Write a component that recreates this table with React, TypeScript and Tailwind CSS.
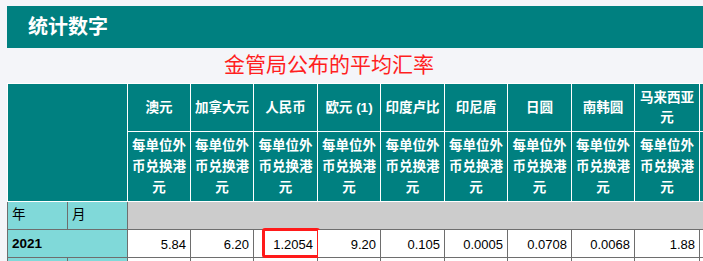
import React from 'react';

const font = { fontFamily: '"Liberation Sans", "Noto Sans CJK SC", sans-serif' };

const currencies = [
  { name: '澳元', w: 63, value: '5.84' },
  { name: '加拿大元', w: 63, value: '6.20' },
  { name: '人民币', w: 64, value: '1.2054', mark: true },
  { name: '欧元 (1)', w: 63, value: '9.20' },
  { name: '印度卢比', w: 64, value: '0.105' },
  { name: '印尼盾', w: 63, value: '0.0005' },
  { name: '日圆', w: 64, value: '0.0708' },
  { name: '南韩圆', w: 63, value: '0.0068' },
  { name: '马来西亚元', w: 65, value: '1.88' },
  { name: '', w: 64, value: '' },
];

export default function App() {
  return (
    <div className="w-[703px] h-[261px] overflow-hidden bg-[#f4f5f9] pt-[6px] pl-[7px]" style={font}>
      <div className="w-[760px] h-[42px] bg-[#008080] flex items-center pl-[21px]">
        <h1 className="text-white font-bold text-[20px] leading-none">统计数字</h1>
      </div>
      <div className="h-[35px] w-[644px] flex items-center justify-center pb-[2px]">
        <span className="text-[#ff1f1f] text-[21px] leading-none">金管局公布的平均汇率</span>
      </div>
      <table className="table-fixed border-collapse text-[13.5px]" style={{ width: 120 + currencies.reduce((s, c) => s + c.w, 0) }}>
        <colgroup>
          <col style={{ width: 60 }} />
          <col style={{ width: 60 }} />
          {currencies.map((c, i) => (
            <col key={i} style={{ width: c.w }} />
          ))}
        </colgroup>
        <thead>
          <tr className="h-[48px]">
            <th rowSpan={2} colSpan={2} className="bg-[#008080] border border-white"></th>
            {currencies.map((c, i) => (
              <th key={i} className="bg-[#008080] border border-white text-white font-bold leading-[20px] px-[2px] text-center">
                {c.name}
              </th>
            ))}
          </tr>
          <tr className="h-[70px]">
            {currencies.map((c, i) => (
              <th key={i} className="bg-[#008080] border border-white text-white font-bold leading-[21px] px-[2px] text-center">
                {c.name ? '每单位外币兑换港元' : ''}
              </th>
            ))}
          </tr>
        </thead>
        <tbody>
          <tr className="h-[28px]">
            <td className="bg-[#80d9d9] border border-[#6e6e6e] pl-[4px] text-black">年</td>
            <td className="bg-[#80d9d9] border border-[#6e6e6e] pl-[4px] text-black">月</td>
            <td colSpan={currencies.length} className="bg-[#cccccc] border border-[#6e6e6e]"></td>
          </tr>
          <tr className="h-[28px]">
            <td colSpan={2} className="bg-[#80d9d9] border border-[#6e6e6e] pl-[4px] pt-[2px] font-bold text-black">2021</td>
            {currencies.map((c, i) => (
              <td key={i} className="relative bg-white border border-[#6e6e6e] text-right pr-[4px] pt-[2px] text-black text-[13px]">
                {c.value}
                {c.mark && (
                  <span className="absolute left-[8px] -right-[3px] -top-[2px] -bottom-[1px] border-[3px] border-[#ff1a1a] rounded-[3px]" />
                )}
              </td>
            ))}
          </tr>
          <tr className="h-[28px]">
            <td className="bg-[#80d9d9] border border-[#6e6e6e]"></td>
            <td className="bg-[#80d9d9] border border-[#6e6e6e]"></td>
            {currencies.map((c, i) => (
              <td key={i} className="bg-white border border-[#6e6e6e]"></td>
            ))}
          </tr>
        </tbody>
      </table>
    </div>
  );
}
